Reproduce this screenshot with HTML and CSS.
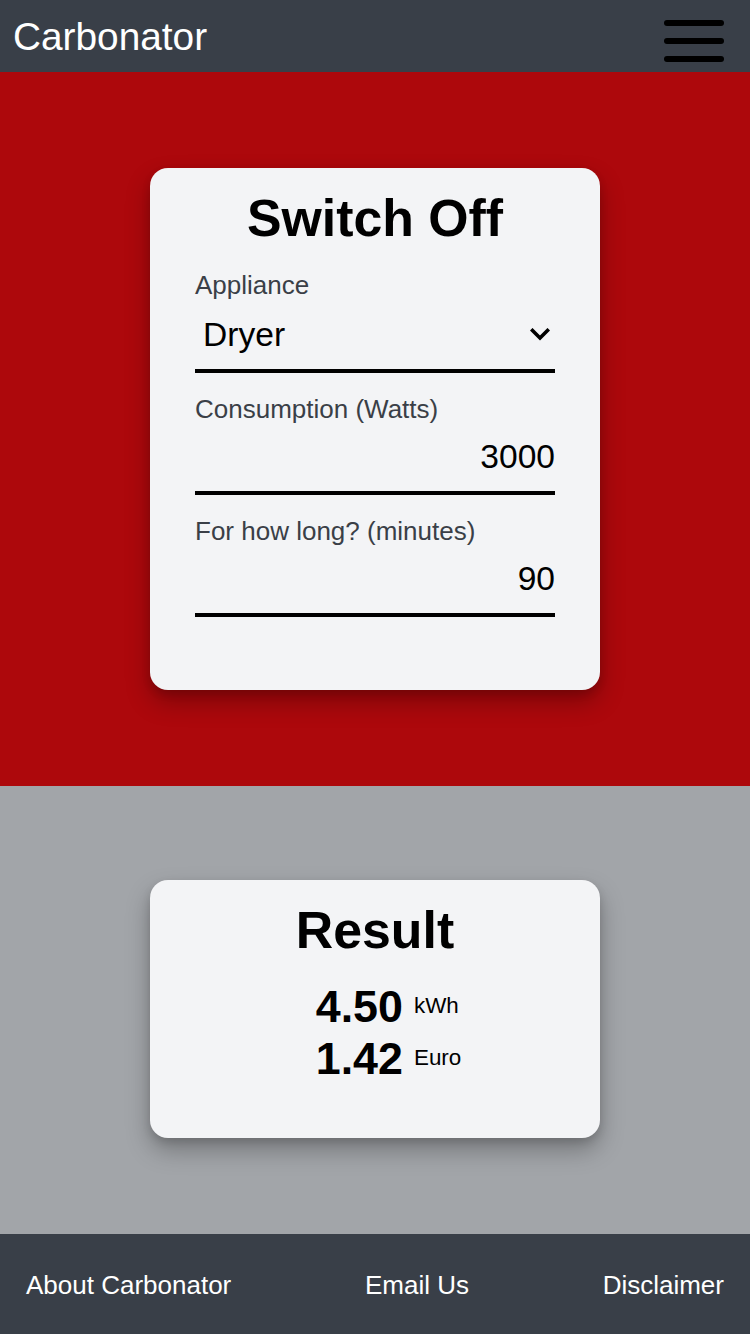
FILE: index.html
```html
<!DOCTYPE html>
<html lang="en">
<head>
<meta charset="utf-8">
<title>Carbonator</title>
<link rel="stylesheet" href="styles.css">
</head>
<body>
<header class="topbar">
  <span class="brand">Carbonator</span>
  <button class="menu" aria-label="Menu">
    <span class="bar"></span><span class="bar"></span><span class="bar"></span>
  </button>
</header>
<main>
  <section class="panel panel-red">
    <div class="card">
      <h1 class="card-title">Switch Off</h1>
      <form class="form">
        <label class="field">
          <span class="label">Appliance</span>
          <span class="select-wrap">
            <select class="control select">
              <option>Dryer</option>
              <option>Kettle</option>
              <option>Oven</option>
            </select>
            <svg class="chevron" width="20" height="13" viewBox="0 0 20 13"><path d="M2.5 2.5 L10 10 L17.5 2.5" fill="none" stroke="#000" stroke-width="3.6" stroke-linecap="square"/></svg>
          </span>
        </label>
        <label class="field">
          <span class="label">Consumption (Watts)</span>
          <input class="control input" type="text" value="3000">
        </label>
        <label class="field">
          <span class="label">For how long? (minutes)</span>
          <input class="control input" type="text" value="90">
        </label>
      </form>
    </div>
  </section>
  <section class="panel panel-gray">
    <div class="card result">
      <h1 class="card-title">Result</h1>
      <div class="values">
        <span class="num">4.50</span><span class="unit">kWh</span>
        <span class="num">1.42</span><span class="unit">Euro</span>
      </div>
    </div>
  </section>
</main>
<footer class="footer">
  <a class="foot-link" href="#">About Carbonator</a>
  <a class="foot-link" href="#">Email Us</a>
  <a class="foot-link" href="#">Disclaimer</a>
</footer>
</body>
</html>
```

FILE: styles.css
```css
* { box-sizing: border-box; }
html, body { margin: 0; padding: 0; }
body {
  font-family: "Liberation Sans", Arial, sans-serif;
  color: #000;
  background: #a2a5a9;
  width: 750px;
}
.topbar {
  height: 72px;
  background: #393f48;
  display: flex;
  align-items: flex-start;
  justify-content: space-between;
  padding: 0 26px 0 13px;
}
.brand {
  color: #fff;
  font-size: 38.8px;
  line-height: 1;
  padding-top: 18px;
}
.menu {
  background: none;
  border: 0;
  padding: 0;
  width: 60px;
  display: flex;
  flex-direction: column;
  gap: 12.5px;
  margin-top: 20px;
}
.bar {
  display: block;
  height: 5.5px;
  background: #000;
  border-radius: 3px;
}
.panel {
  padding: 96px 0;
  display: flex;
  justify-content: center;
}
.panel-red { background: #ad080c; height: 714px; }
.panel-gray { background: #a2a5a9; height: 448px; padding-top: 94px; }
.card {
  width: 450px;
  background: #f3f4f6;
  border-radius: 18px;
  padding: 20px 45px 72px;
  box-shadow: 0 12px 24px rgba(0,0,0,0.28), 0 4px 8px rgba(0,0,0,0.12);
}
.card-title {
  margin: 0;
  text-align: center;
  font-size: 51.8px;
  line-height: 61.4px;
  font-weight: 700;
}
.form {
  display: flex;
  flex-direction: column;
  gap: 16px;
  margin-top: 16px;
}
.field {
  display: flex;
  flex-direction: column;
}
.label {
  font-size: 26px;
  line-height: 38.4px;
  color: #3a3f47;
  padding-top: 1px;
  margin-bottom: -1px;
}
.control {
  font-family: "Liberation Sans", Arial, sans-serif;
  font-size: 33.6px;
  line-height: 38.6px;
  color: #000;
  background: transparent;
  border: 0;
  border-bottom: 4px solid #000;
  border-radius: 0;
  outline: none;
  width: 100%;
  margin: 0;
}
.input {
  text-align: right;
  padding: 10px 0 15px 0;
  height: 67.6px;
}
.select-wrap {
  display: flex;
  align-items: center;
  position: relative;
}
.select {
  appearance: none;
  -webkit-appearance: none;
  padding: 12px 40px 15px 8px;
  height: 69.6px;
}
.chevron {
  position: absolute;
  right: 5px;
  top: 24px;
  pointer-events: none;
}
.result { padding-bottom: 54px; }
.values {
  display: grid;
  grid-template-columns: auto auto;
  justify-content: center;
  column-gap: 11px;
  margin-top: 20px;
  padding-left: 27px;
}
.num {
  font-size: 44.8px;
  line-height: 51.2px;
  font-weight: 700;
  text-align: right;
}
.unit {
  font-size: 22.4px;
  line-height: 49.2px;
}
.footer {
  height: 100px;
  background: #393f48;
  display: flex;
  align-items: center;
  justify-content: space-between;
  padding: 0 26px;
}
.foot-link {
  color: #fff;
  text-decoration: none;
  font-size: 26px;
  line-height: 1;
  padding-top: 1px;
}
```
